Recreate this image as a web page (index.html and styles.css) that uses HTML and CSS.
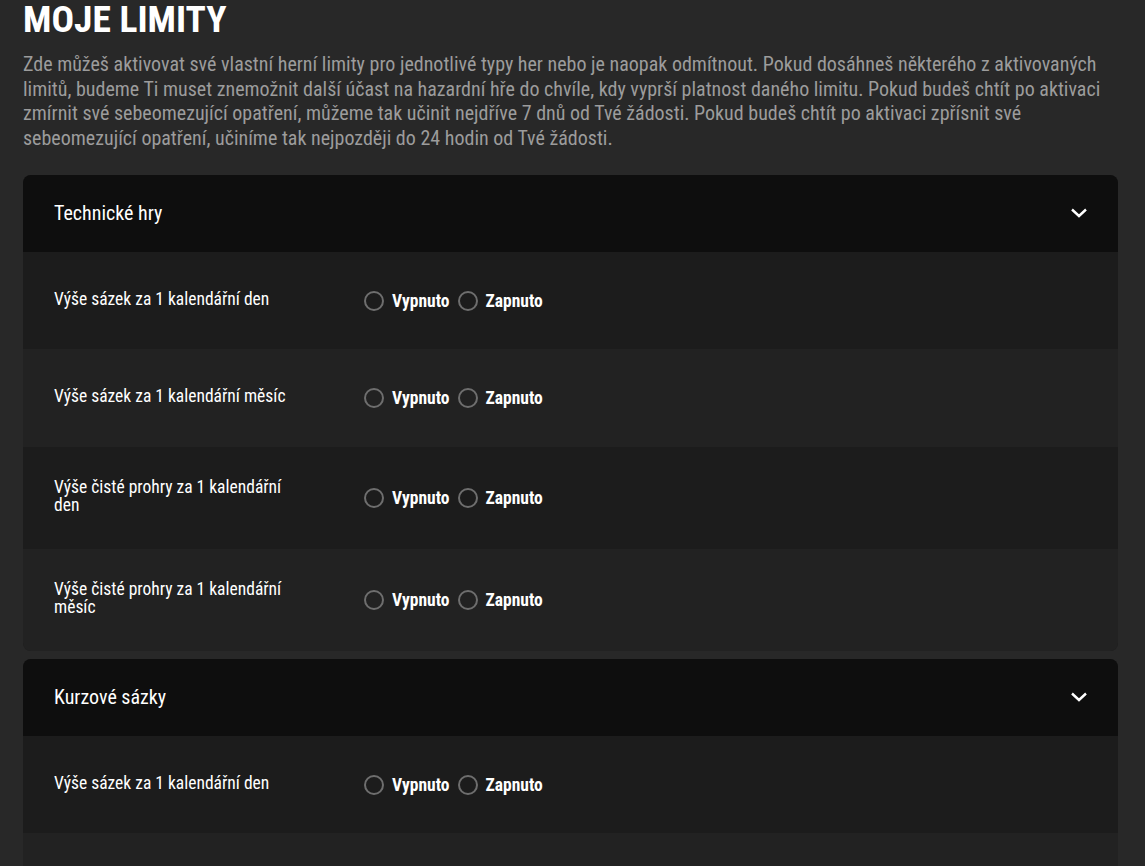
FILE: index.html
```html
<!DOCTYPE html>
<html lang="cs">
<head>
  <meta charset="UTF-8">
  <meta name="viewport" content="width=device-width, initial-scale=1.0">
  <link rel="stylesheet" href="styles.css">
</head>
<body>
  <div class="limits">
    <h1 class="limits-title">MOJE LIMITY</h1>
    <p class="limits-intro">Zde můžeš aktivovat své vlastní herní limity pro jednotlivé typy her nebo je naopak odmítnout. Pokud dosáhneš některého z aktivovaných limitů, budeme Ti muset znemožnit další účast na hazardní hře do chvíle, kdy vyprší platnost daného limitu. Pokud budeš chtít po aktivaci zmírnit své sebeomezující opatření, můžeme tak učinit nejdříve 7 dnů od Tvé žádosti. Pokud budeš chtít po aktivaci zpřísnit své sebeomezující opatření, učiníme tak nejpozději do 24 hodin od Tvé žádosti.</p>

    <!-- Technické hry -->
    <div class="limit-group">
      <div class="group-head">
        <span class="group-name">Technické hry</span>
        <svg class="chevron" width="18" height="12" viewBox="0 0 18 12"><path d="M2 2.5 L9 9 L16 2.5" fill="none" stroke="#fff" stroke-width="2.4"/></svg>
      </div>
      <div class="limit-row">
        <div class="limit-label">Výše sázek za 1 kalendářní den</div>
        <div class="limit-options">
          <label class="opt"><span class="radio"></span>Vypnuto</label>
          <label class="opt"><span class="radio"></span>Zapnuto</label>
        </div>
      </div>
      <div class="limit-row">
        <div class="limit-label">Výše sázek za 1 kalendářní měsíc</div>
        <div class="limit-options">
          <label class="opt"><span class="radio"></span>Vypnuto</label>
          <label class="opt"><span class="radio"></span>Zapnuto</label>
        </div>
      </div>
      <div class="limit-row">
        <div class="limit-label">Výše čisté prohry za 1 kalendářní den</div>
        <div class="limit-options">
          <label class="opt"><span class="radio"></span>Vypnuto</label>
          <label class="opt"><span class="radio"></span>Zapnuto</label>
        </div>
      </div>
      <div class="limit-row">
        <div class="limit-label">Výše čisté prohry za 1 kalendářní měsíc</div>
        <div class="limit-options">
          <label class="opt"><span class="radio"></span>Vypnuto</label>
          <label class="opt"><span class="radio"></span>Zapnuto</label>
        </div>
      </div>
    </div>

    <!-- Kurzové sázky -->
    <div class="limit-group">
      <div class="group-head">
        <span class="group-name">Kurzové sázky</span>
        <svg class="chevron" width="18" height="12" viewBox="0 0 18 12"><path d="M2 2.5 L9 9 L16 2.5" fill="none" stroke="#fff" stroke-width="2.4"/></svg>
      </div>
      <div class="limit-row">
        <div class="limit-label">Výše sázek za 1 kalendářní den</div>
        <div class="limit-options">
          <label class="opt"><span class="radio"></span>Vypnuto</label>
          <label class="opt"><span class="radio"></span>Zapnuto</label>
        </div>
      </div>
      <div class="limit-row">
        <div class="limit-label">Výše sázek za 1 kalendářní měsíc</div>
        <div class="limit-options">
          <label class="opt"><span class="radio"></span>Vypnuto</label>
          <label class="opt"><span class="radio"></span>Zapnuto</label>
        </div>
      </div>
    </div>
  </div>
</body>
</html>
```
FILE: styles.css
```css
body {
  background-color: #282828;
  color: #fff;
  font-family: "Roboto Condensed", Roboto, sans-serif;
  margin: 0;
  padding: 0;
}
.limits {
  padding: 0 27px 0 23px;
}
.limits-title {
  margin: 0;
  font-size: 37.5px;
  line-height: 38px;
  font-weight: 700;
  color: #fff;
}
.limits-intro {
  margin: 14px 0 24px;
  font-size: 20px;
  line-height: 24.7px;
  color: #9c9c9c;
}
.limit-group {
  background-color: #1c1c1c;
  border-radius: 8px;
  overflow: hidden;
  margin-bottom: 8px;
}
.group-head {
  display: flex;
  align-items: center;
  justify-content: space-between;
  height: 77px;
  padding: 0 30px 0 31px;
  background-color: #0e0e0e;
}
.group-name {
  font-size: 20px;
}
.chevron {
  display: block;
}
.limit-row {
  display: flex;
  align-items: center;
  box-sizing: border-box;
  min-height: 97.5px;
  padding: 31px 31px 35px;
}
.limit-row:nth-child(odd) {
  background-color: #222;
}
.limit-label {
  flex: 0 0 240px;
  margin-right: 70px;
  font-size: 17.5px;
  line-height: 18px;
}
.limit-options {
  display: flex;
  align-items: center;
  gap: 8px;
  margin-top: 4px;
}
.opt {
  display: flex;
  align-items: center;
  font-size: 17.5px;
  font-weight: 700;
}
.radio {
  width: 16px;
  height: 16px;
  border: 2px solid #6e6e6e;
  border-radius: 50%;
  margin-right: 8px;
}
```
